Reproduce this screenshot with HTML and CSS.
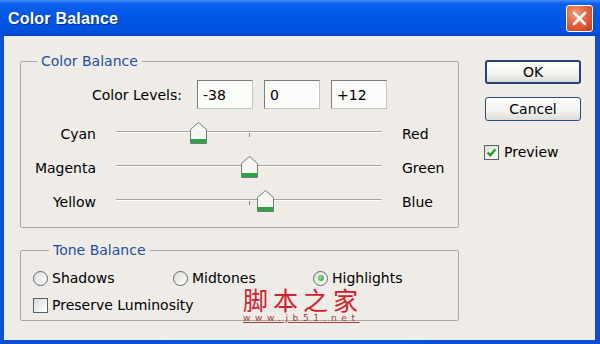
FILE: index.html
```html
<!DOCTYPE html>
<html lang="en">

<head>
    <meta charset="UTF-8">
    <meta name="viewport" content="width=device-width, initial-scale=1.0">
    <title>Color Balance</title>
    <link rel="stylesheet" href="styles.css">
</head>

<body>
    <div class="window">
        <div class="titlebar">
            <span class="title">Color Balance</span>
            <button class="close-btn" aria-label="Close">
                <svg width="15" height="15" viewBox="0 0 15 15">
                    <path d="M2 2 L13 13 M13 2 L2 13" stroke="#fff" stroke-width="2.6" stroke-linecap="round" />
                </svg>
            </button>
        </div>

        <div class="client">
            <div class="main">
                <fieldset class="group color-group">
                    <legend>Color Balance</legend>
                    <div class="levels">
                        <span class="levels-label">Color Levels:</span>
                        <input class="level" type="text" value="-38">
                        <input class="level" type="text" value="0">
                        <input class="level" type="text" value="+12">
                    </div>

                    <div class="sliders">
                        <span class="s-left">Cyan</span>
                        <div class="track">
                            <span class="tick"></span>
                            <span class="thumb" style="left: 82px;">
                                <svg width="17" height="22" viewBox="0 0 17 22">
                                    <path d="M8.5 0.5 L16.5 7.5 V21.5 H0.5 V7.5 Z" fill="#f6f7f3" stroke="#6f7f72" />
                                    <rect x="1" y="17" width="15" height="4" fill="#2aa544" />
                                </svg>
                            </span>
                        </div>
                        <span class="s-right">Red</span>

                        <span class="s-left">Magenta</span>
                        <div class="track">
                            <span class="tick"></span>
                            <span class="thumb" style="left: 133px;">
                                <svg width="17" height="22" viewBox="0 0 17 22">
                                    <path d="M8.5 0.5 L16.5 7.5 V21.5 H0.5 V7.5 Z" fill="#f6f7f3" stroke="#6f7f72" />
                                    <rect x="1" y="17" width="15" height="4" fill="#2aa544" />
                                </svg>
                            </span>
                        </div>
                        <span class="s-right">Green</span>

                        <span class="s-left">Yellow</span>
                        <div class="track">
                            <span class="tick"></span>
                            <span class="thumb" style="left: 149px;">
                                <svg width="17" height="22" viewBox="0 0 17 22">
                                    <path d="M8.5 0.5 L16.5 7.5 V21.5 H0.5 V7.5 Z" fill="#f6f7f3" stroke="#6f7f72" />
                                    <rect x="1" y="17" width="15" height="4" fill="#2aa544" />
                                </svg>
                            </span>
                        </div>
                        <span class="s-right">Blue</span>
                    </div>
                </fieldset>

                <fieldset class="group tone-group">
                    <legend>Tone Balance</legend>
                    <div class="radios">
                        <label class="radio"><span class="radio-dot"></span>Shadows</label>
                        <label class="radio"><span class="radio-dot"></span>Midtones</label>
                        <label class="radio"><span class="radio-dot selected"></span>Highlights</label>
                    </div>
                    <label class="check"><span class="box"></span>Preserve Luminosity</label>
                </fieldset>
            </div>

            <div class="side">
                <button class="btn default">OK</button>
                <button class="btn">Cancel</button>
                <label class="check preview">
                    <span class="box">
                        <svg width="11" height="11" viewBox="0 0 11 11">
                            <path d="M1.5 5.5 L4.2 8.3 L9.5 2.2" fill="none" stroke="#21a121" stroke-width="2.2" />
                        </svg>
                    </span>Preview
                </label>
            </div>
        </div>

        <!-- site watermark stamped over the dialog -->
        <div class="watermark">
            <div class="wm-cn">脚本之家</div>
            <div class="wm-url">www.jb51.net</div>
        </div>
    </div>
</body>

</html>
```

FILE: styles.css
```css
body {
    margin: 0;
    width: 600px;
    height: 344px;
    overflow: hidden;
    font-family: "DejaVu Sans", Tahoma, sans-serif;
    font-size: 14px;
    color: #000;
}

.window {
    position: relative;
    width: 600px;
    height: 344px;
    display: flex;
    flex-direction: column;
    background: linear-gradient(to right, #0a4fd6, #0a55e0 50%, #0a4ed2);
}

.titlebar {
    height: 36px;
    flex-shrink: 0;
    display: flex;
    align-items: center;
    justify-content: space-between;
    padding: 1px 7px 0 8px;
    box-sizing: border-box;
    background: linear-gradient(#3d8cf6 0, #0c5fea 4px, #0056e6 45%, #0052df 85%, #0046cc 100%);
}

.title {
    font-family: "Liberation Sans", Arial, sans-serif;
    font-weight: bold;
    font-size: 16px;
    color: #fff;
    text-shadow: 1px 1px 0 #0a2f8a;
    letter-spacing: 0.2px;
}

.close-btn {
    width: 27px;
    height: 27px;
    padding: 0;
    border: 1px solid #fff;
    border-radius: 3px;
    background: radial-gradient(circle at 35% 30%, #f49a7c, #e15a34 55%, #c33c1c);
    display: flex;
    align-items: center;
    justify-content: center;
}

.client {
    flex-grow: 1;
    margin: 0 5px 4px 4px;
    background-color: #efece8;
    display: flex;
}

.main {
    width: 439px;
    padding: 16px 0 0 16px;
}

.group {
    margin: 0;
    padding: 0;
    border: 1px solid #a9a9a2;
    border-radius: 2px;
}

.group legend {
    margin-left: 16px;
    padding: 0 4px;
    line-height: 18px;
    color: #1d4fa3;
}

.color-group {
    padding-bottom: 10px;
}

.levels {
    display: flex;
    align-items: center;
    gap: 11px;
    margin-top: 10px;
    height: 29px;
}

.levels-label {
    width: 161px;
    margin-right: 4px;
    text-align: right;
}

.level {
    width: 56px;
    height: 29px;
    box-sizing: border-box;
    padding: 0 5px;
    border: 1px solid;
    border-color: #7c7c7c #c4c4c0 #c4c4c0 #7c7c7c;
    background: #fcfcfa;
    font-family: inherit;
    font-size: 14px;
    color: #000;
}

.sliders {
    display: grid;
    grid-template-columns: 75px 266px auto;
    grid-auto-rows: 34px;
    column-gap: 20px;
    align-items: center;
    margin-top: 6px;
}

.s-left,
.s-right {
    padding-top: 3px;
}

.s-left {
    text-align: right;
}

.track {
    position: relative;
    height: 34px;
}

.track::before {
    content: "";
    position: absolute;
    left: 0;
    right: 0;
    top: 16px;
    height: 1px;
    background: #a6a69e;
    border-bottom: 1px solid #fff;
    border-radius: 1px;
}

.tick {
    position: absolute;
    left: 133px;
    top: 18px;
    width: 1px;
    height: 4px;
    background: #8a8a84;
}

.thumb {
    position: absolute;
    top: 7px;
    width: 17px;
    height: 22px;
    margin-left: -8px;
}

.thumb svg {
    display: block;
}

.tone-group {
    margin-top: 13px;
    padding: 9px 0 5px 12px;
}

.radios {
    display: grid;
    grid-template-columns: 140px 140px 140px;
    height: 20px;
    align-items: center;
}

.radio,
.check {
    display: flex;
    align-items: center;
    gap: 4px;
}

.radio-dot {
    width: 13px;
    height: 13px;
    border: 1px solid #5c6a78;
    border-radius: 50%;
    background: linear-gradient(135deg, #dcdcd6, #fff);
    display: flex;
    align-items: center;
    justify-content: center;
}

.radio-dot.selected::after {
    content: "";
    width: 6px;
    height: 6px;
    border-radius: 50%;
    background: radial-gradient(circle at 40% 40%, #8fe08f, #2a9a2a);
}

.check {
    height: 20px;
    margin-top: 7px;
}

.box {
    width: 13px;
    height: 13px;
    border: 1px solid #56606c;
    background: linear-gradient(135deg, #dcdcd6, #fff);
    display: flex;
    align-items: center;
    justify-content: center;
}

.side {
    width: 96px;
    margin-left: 26px;
    padding-top: 24px;
}

.btn {
    display: block;
    width: 96px;
    height: 24px;
    margin-bottom: 13px;
    padding: 0;
    border: 1px solid #2a4c84;
    border-radius: 3px;
    background: linear-gradient(#ffffff, #f2f2ee 60%, #dedcd4);
    font-family: inherit;
    font-size: 14px;
    color: #000;
}

.btn.default {
    border: 2px solid #23417a;
}

.preview {
    margin-top: 21px;
    margin-left: -1px;
    gap: 5px;
}

.watermark {
    position: absolute;
    left: 243px;
    top: 287px;
    pointer-events: none;
}

.wm-cn {
    font-family: "Noto Sans CJK SC", sans-serif;
    font-size: 25px;
    line-height: 25px;
    letter-spacing: 5px;
    color: #d4202c;
}

.wm-url {
    margin-top: 1px;
    font-family: "DejaVu Sans", sans-serif;
    font-size: 9px;
    line-height: 11px;
    letter-spacing: 4.6px;
    color: #9c4040;
    text-decoration: underline;
}
```
